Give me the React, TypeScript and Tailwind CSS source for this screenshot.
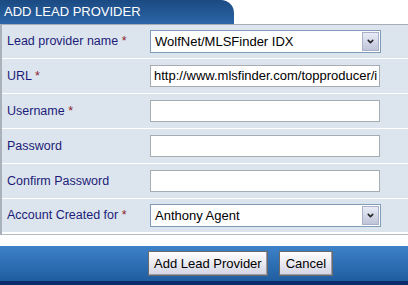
import { ChevronDown } from "lucide-react";

type Field = {
  label: string;
  required?: boolean;
  kind: "select" | "text" | "password";
  value?: string;
};

const FIELDS: Field[] = [
  { label: "Lead provider name", required: true, kind: "select", value: "WolfNet/MLSFinder IDX" },
  { label: "URL", required: true, kind: "text", value: "http://www.mlsfinder.com/topproducer/i" },
  { label: "Username", required: true, kind: "text" },
  { label: "Password", kind: "password" },
  { label: "Confirm Password", kind: "password" },
  { label: "Account Created for", required: true, kind: "select", value: "Anthony Agent" },
];

function FakeSelect({ value }: { value: string }) {
  return (
    <div className="flex h-[23px] w-[231px] items-stretch border border-[#7f9db9] bg-white">
      <span className="flex-1 overflow-hidden whitespace-nowrap pl-[4px] text-[13px] leading-[21px] text-black">
        {value}
      </span>
      <span className="m-[1px] flex w-[17px] items-center justify-center border border-[#a9b0c8] bg-gradient-to-b from-[#e9ebf6] to-[#c0c4da]">
        <ChevronDown className="size-[9px] text-[#222]" strokeWidth={4} />
      </span>
    </div>
  );
}

export default function App() {
  return (
    <div className="flex h-[285px] w-[408px] flex-col bg-white font-['Liberation_Sans',Arial,sans-serif]">
      <div className="flex h-[24px]">
        <div className="flex w-[234px] items-center rounded-tr-[13px] bg-gradient-to-b from-[#1b4a82] to-[#2c66a8] pl-[4px] text-[13px] text-white">
          ADD LEAD PROVIDER
        </div>
      </div>

      <div className="border-t border-l-2 border-t-[#a9adb4] border-l-[#a9b1ba] bg-[#dce5ee]">
        {FIELDS.map((field, index) => (
          <div
            key={field.label}
            className={`flex items-center ${
              index < FIELDS.length - 1 ? "border-b border-white" : "border-b-2 border-white"
            } ${index === 0 ? "h-[34px]" : "h-[35px]"}`}
          >
            <div className="w-[148px] pl-[5px] text-[12.5px] text-[#1c1c78]">
              {field.label}
              {field.required && <span className="text-[#8b1a2a]"> *</span>}
            </div>
            {field.kind === "select" ? (
              <FakeSelect value={field.value ?? ""} />
            ) : (
              <div className="h-[22px] w-[230px] overflow-hidden whitespace-nowrap border border-[#a5acb2] bg-white pl-[3px] text-[13px] leading-[20px] text-black">
                {field.value}
              </div>
            )}
          </div>
        ))}
        <div className="h-[1px] bg-[#b5bcc4]" />
      </div>

      <div className="h-[11px] bg-white" />

      <div className="flex flex-1 flex-col">
        <div className="flex flex-1 items-center gap-[11px] bg-gradient-to-b from-[#3d82c9] to-[#1f5d9f] pl-[148px]">
          <button
            type="button"
            className="h-[25px] border border-[#6a6a6a] bg-gradient-to-b from-white to-[#d4d4e4] px-[5px] text-[13px] text-black shadow-[inset_-1px_-1px_0_#9a9aaa]"
          >
            Add Lead Provider
          </button>
          <button
            type="button"
            className="h-[25px] border border-[#6a6a6a] bg-gradient-to-b from-white to-[#d4d4e4] px-[6px] text-[13px] text-black shadow-[inset_-1px_-1px_0_#9a9aaa]"
          >
            Cancel
          </button>
        </div>
        <div className="h-[4px] bg-[#0b2c6b]" />
      </div>
    </div>
  );
}
